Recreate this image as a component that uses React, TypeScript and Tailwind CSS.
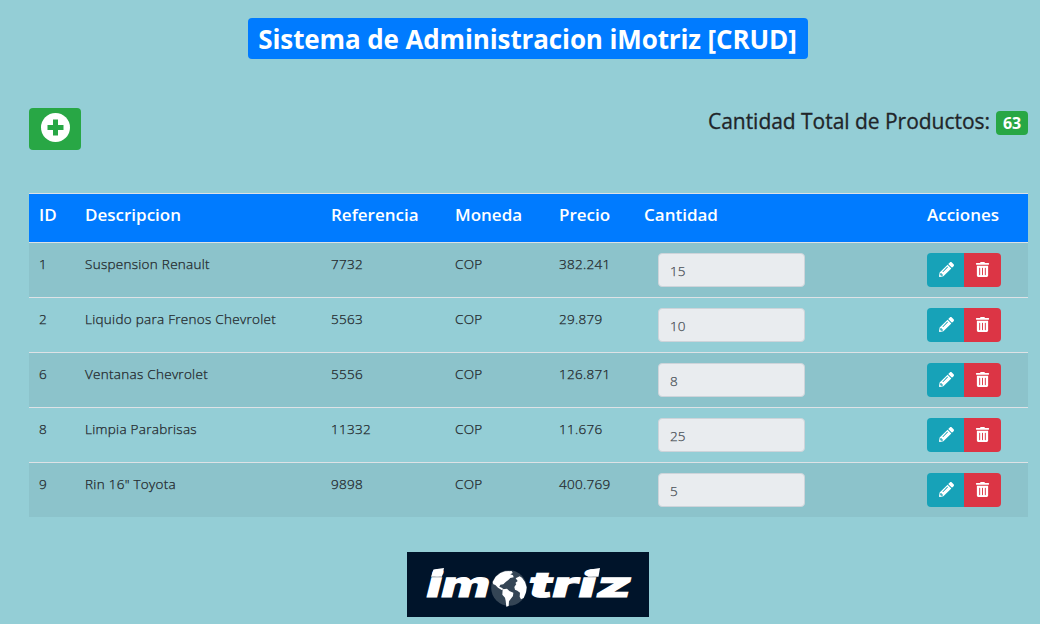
import { FaPencilAlt, FaTrashAlt } from "react-icons/fa";

type Product = {
  id: number;
  description: string;
  reference: string;
  currency: string;
  price: string;
  quantity: number;
};

const products: Product[] = [
  { id: 1, description: "Suspension Renault", reference: "7732", currency: "COP", price: "382.241", quantity: 15 },
  { id: 2, description: "Liquido para Frenos Chevrolet", reference: "5563", currency: "COP", price: "29.879", quantity: 10 },
  { id: 6, description: "Ventanas Chevrolet", reference: "5556", currency: "COP", price: "126.871", quantity: 8 },
  { id: 8, description: "Limpia Parabrisas", reference: "11332", currency: "COP", price: "11.676", quantity: 25 },
  { id: 9, description: 'Rin 16" Toyota', reference: "9898", currency: "COP", price: "400.769", quantity: 5 },
];

const headings = ["ID", "Descripcion", "Referencia", "Moneda", "Precio", "Cantidad", "Acciones"];

function PlusIcon() {
  return (
    <svg className="size-[29px]" viewBox="0 0 29 29" aria-hidden="true">
      <circle cx="14.5" cy="14.5" r="14.5" fill="#fff" />
      <path d="M12 6.5h5V12h5.5v5H17v5.5h-5V17H6.500v-5H12z" fill="#28a745" />
    </svg>
  );
}

function Logo() {
  return (
    <svg className="h-[65px] w-[242px] bg-[#00142a]" viewBox="0 0 242 65" role="img" aria-label="imotriz">
      <g fill="#fff" stroke="#fff" strokeWidth="1.2" className="font-['Inter',sans-serif] text-[35px] font-extrabold">
        <text transform="translate(17.5 45) skewX(-14)" textLength="63" lengthAdjust="spacingAndGlyphs">im</text>
        <text transform="translate(119.5 45) skewX(-14)" textLength="103" lengthAdjust="spacingAndGlyphs">triz</text>
      </g>
      <path d="M24 24.800L26.500 17.500L37 16L35 24.800ZM180.500 24.800L183 17.500L193 16L191.500 24.800Z" fill="#fff" />
      <circle cx="102" cy="36" r="17.8" fill="#344555" />
      <g fill="#fff" transform="translate(78 10) scale(.3333)">
        <path d="M23 60L32 44L46 33L60 28L80 27L83 33L76 37L84 40L86 46L76 48L70 54L62 60L55 67L46 68L43 74L50 77L56 82L50 84L39 77L31 69L25 67Z" />
        <path d="M53 82L66 80L73 87L85 92L84 102L77 111L72 118L71 132L64 134L62 116L60 107L52 98Z" />
        <path d="M92 49L104 43L111 47L120 60L125 76L123 91L116 108L108 112L104 104L105 92L97 86L90 83L88 75L94 66L91 63L98 57Z" />
      </g>
    </svg>
  );
}

function ProductRow({ product }: { product: Product }) {
  return (
    <tr className="h-[55px] border-t border-[#dee2e6] align-top last:h-[54px] odd:bg-black/5">
      <td className="pt-[11px] pl-[10px]">{product.id}</td>
      <td className="pt-[11px] pl-[10px]">{product.description}</td>
      <td className="pt-[11px] pl-[10px]">{product.reference}</td>
      <td className="pt-[11px] pl-[10px]">{product.currency}</td>
      <td className="pt-[11px] pl-[10px]">{product.price}</td>
      <td className="pt-[10px] pl-[24px]">
        <input
          disabled
          defaultValue={product.quantity}
          className="block h-[34px] w-[147px] rounded-[4px] border border-[#ced4da] bg-[#e9ecef] px-[11px] pt-[2px] tracking-[0] text-[#495057] [-webkit-text-stroke:0.25px_#495057]"
        />
      </td>
      <td className="pt-[10px] pl-[10px]">
        <div className="flex h-[34px] w-[74px] overflow-hidden rounded-[4px] text-[15px] text-white">
          <button className="flex w-[37px] items-center justify-center bg-[#17a2b8] pb-px pl-px" aria-label="Editar">
            <FaPencilAlt />
          </button>
          <button className="flex w-[37px] items-center justify-center bg-[#dc3545] pb-px" aria-label="Eliminar">
            <FaTrashAlt />
          </button>
        </div>
      </td>
    </tr>
  );
}

export default function App() {
  return (
    <main className="flex h-[624px] flex-col overflow-hidden bg-[#94ced6] pr-[12px] pl-[29px] font-['Open_Sans','Noto_Sans',sans-serif] text-[#212529]">
      <h1 className="mt-[18px] ml-[219px] flex h-[41px] w-[560px] items-center justify-center rounded-[4px] bg-[#007bff] pt-[2px] pr-px text-[26px] font-bold tracking-[-0.12px] whitespace-nowrap text-white">
        Sistema de Administracion iMotriz [CRUD]
      </h1>
      <div className="mt-[49px] flex items-start justify-between">
        <button className="flex h-[42px] w-[52px] items-center justify-center rounded-[4px] bg-[#28a745] pb-[4px]" aria-label="Agregar">
          <PlusIcon />
        </button>
        <h2 className="flex items-center text-[21px] leading-[24px] font-medium tracking-[-0.03px] whitespace-nowrap [-webkit-text-stroke:0.3px_#212529]">
          <span className="pb-[2px]">Cantidad Total de Productos:</span>
          <span className="mt-[3px] ml-[6px] flex h-[24px] w-[32px] items-center justify-center rounded-[4px] bg-[#28a745] text-[16px] font-bold text-white [-webkit-text-stroke:0]">
            63
          </span>
        </h2>
      </div>
      <table className="mt-[43px] w-[999px] table-fixed border-collapse text-[13.5px] leading-[21px] font-light tracking-[0.28px] [-webkit-text-stroke:0.25px_#212529]">
        <colgroup>
          <col className="w-[46px]" />
          <col className="w-[246px]" />
          <col className="w-[124px]" />
          <col className="w-[104px]" />
          <col className="w-[85px]" />
          <col className="w-[283px]" />
          <col className="w-[111px]" />
        </colgroup>
        <thead>
          <tr className="h-[49px] border-t border-[#dee2e6] bg-[#007bff] align-top text-[17px] leading-[24px] tracking-[0] text-white [-webkit-text-stroke:0]">
            {headings.map((heading) => (
              <th key={heading} className="pt-[9px] pl-[10px] text-left font-semibold">
                {heading}
              </th>
            ))}
          </tr>
        </thead>
        <tbody>
          {products.map((product) => (
            <ProductRow key={product.id} product={product} />
          ))}
        </tbody>
      </table>
      <div className="mt-[35px] flex pl-[378px]">
        <Logo />
      </div>
    </main>
  );
}
